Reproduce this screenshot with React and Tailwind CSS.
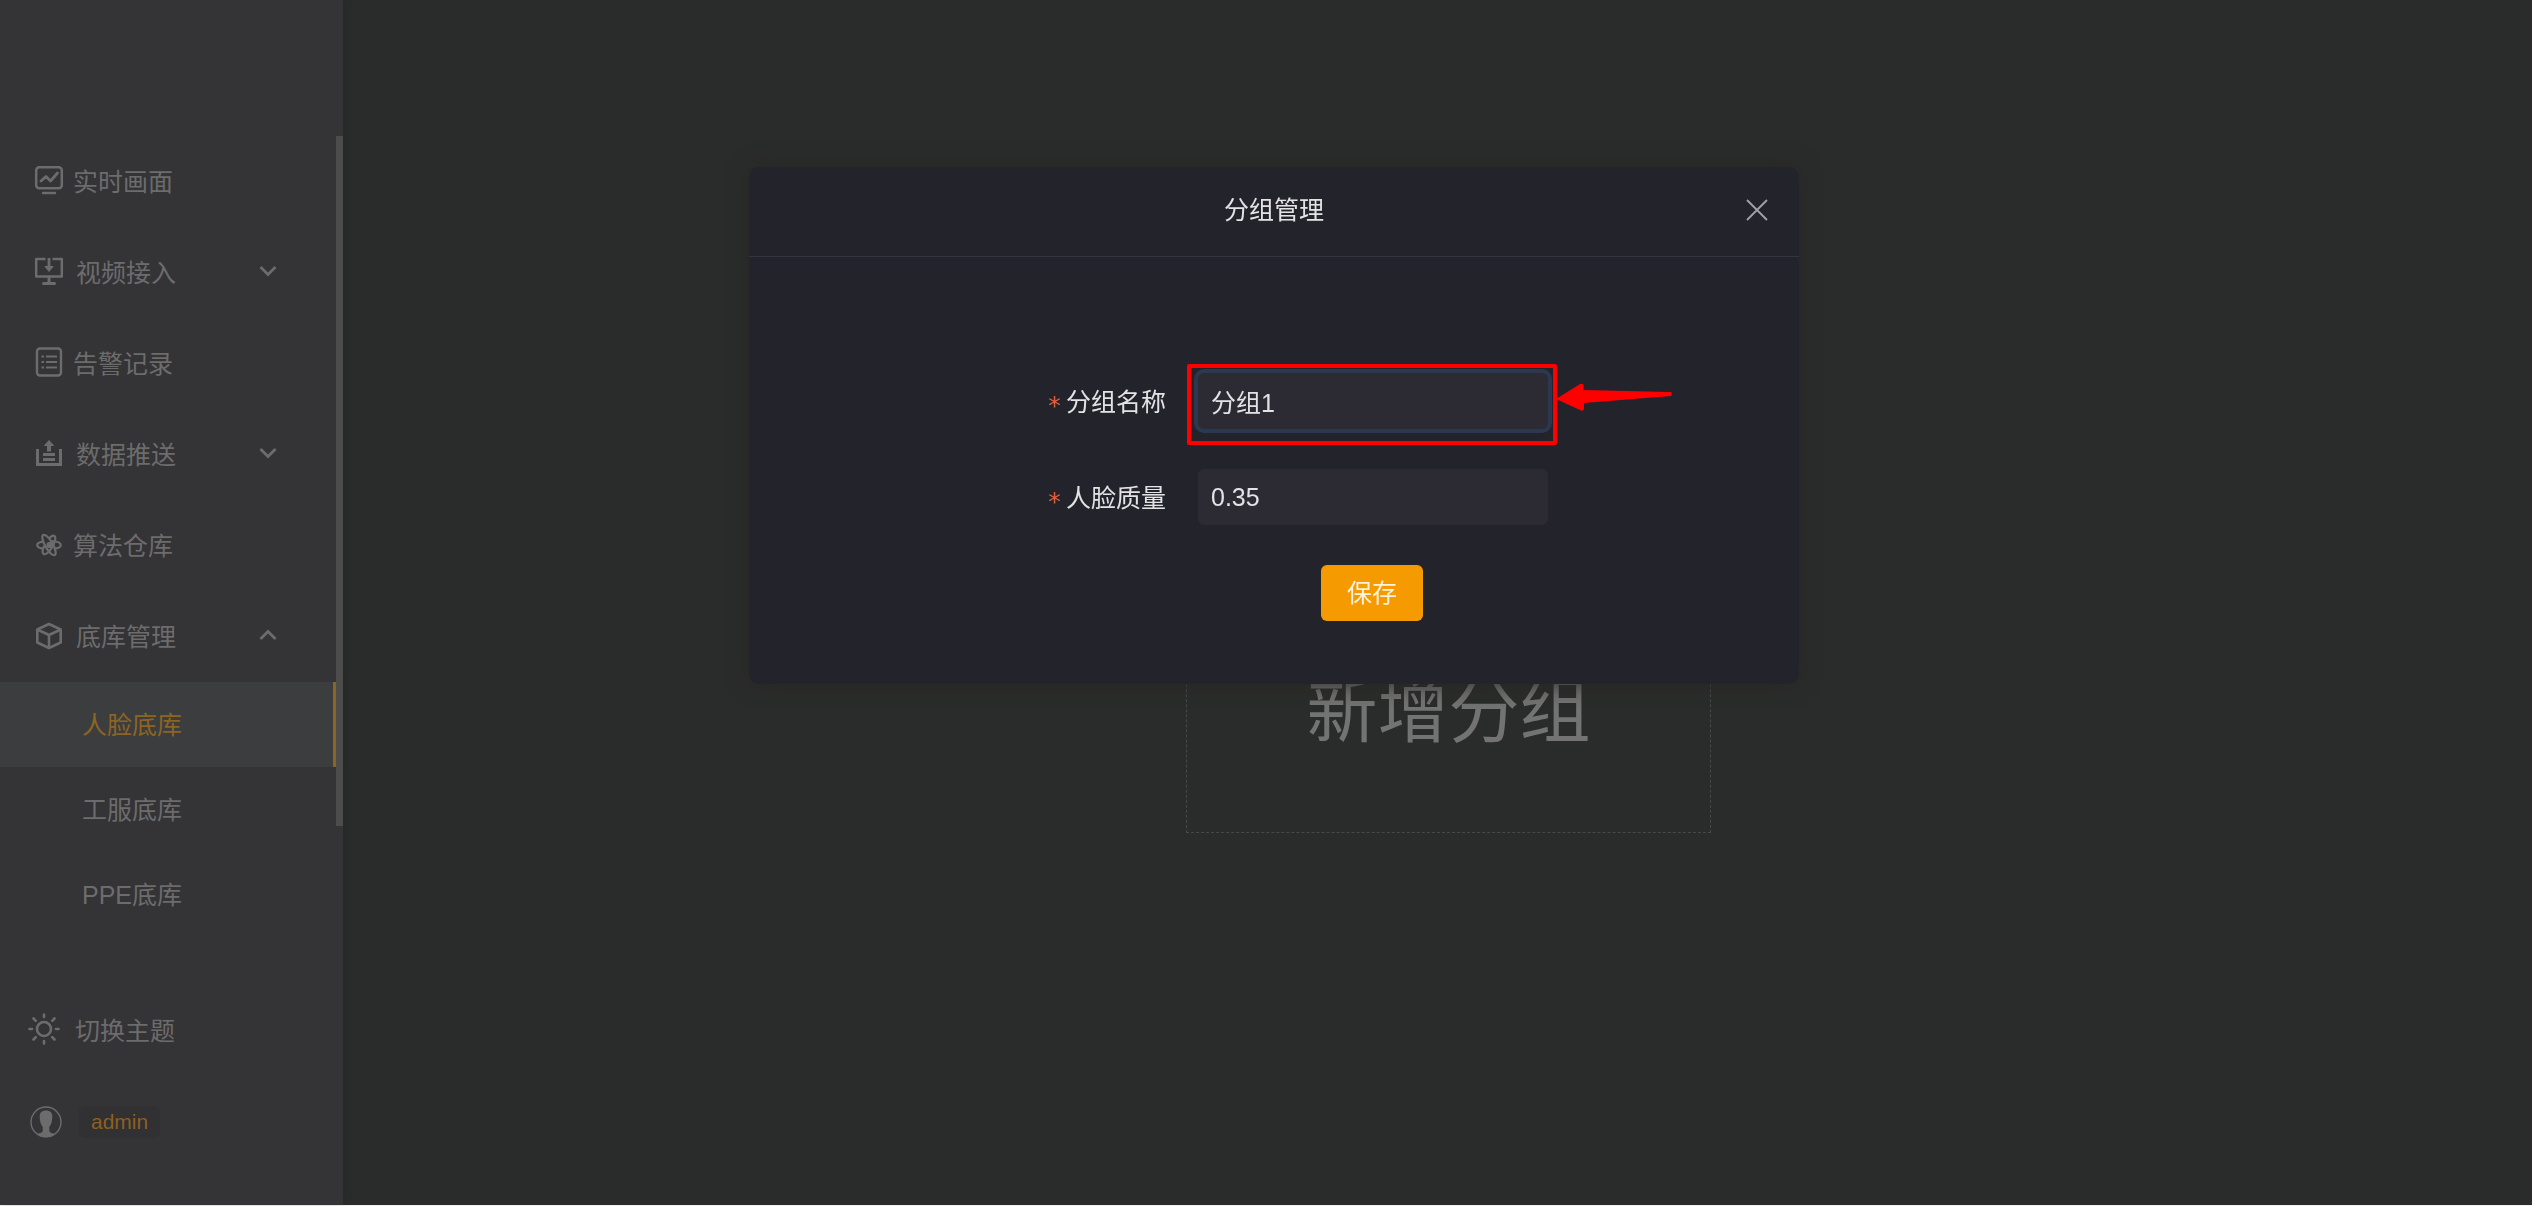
import { useState } from 'react';

const FONT = "font-['Liberation_Sans','Noto_Sans_CJK_SC',sans-serif]";

// --- ICONS ---
const LiveIcon = () => (
    <svg width="30" height="30" viewBox="0 0 30 30" fill="none" stroke="currentColor" strokeWidth="2.5" strokeLinecap="round" strokeLinejoin="round">
        <rect x="2.2" y="2.2" width="25.600" height="21" rx="3" />
        <path d="M7 16l5-4.500 4.500 4.500 7-8" strokeWidth="2.8" />
        <path d="M9 28h12" />
    </svg>
);

const VideoIcon = () => (
    <svg width="30" height="30" viewBox="0 0 30 30" fill="none" stroke="currentColor" strokeWidth="2.5" strokeLinejoin="round">
        <path d="M11.500 3H2.200v17.500h25.600V3H18.500" />
        <path d="M15 2v10" strokeWidth="2.800" />
        <path d="M11 10.500h8l-4 5z" fill="currentColor" strokeWidth="1" />
        <path d="M15 21v6M9.500 27.500h11" strokeWidth="3" strokeLinecap="round" />
    </svg>
);

const AlarmIcon = () => (
    <svg width="30" height="30" viewBox="0 0 30 30" fill="none" stroke="currentColor" strokeWidth="2.400">
        <rect x="3" y="1.500" width="24" height="27" rx="3" />
        <path d="M12 9.500h11M12 15h11M12 20.500h11M7.500 9.500h2.500M7.500 15h2.500M7.500 20.500h2.500" strokeWidth="2.200" />
    </svg>
);

const PushIcon = () => (
    <svg width="30" height="30" viewBox="0 0 30 30" fill="none" stroke="currentColor" strokeWidth="4">
        <path d="M3.500 11v15.500h23V11" strokeWidth="3" />
        <path d="M15 13.500V6" />
        <path d="M10.500 7.500L15 2.500l4.500 5z" fill="currentColor" strokeWidth="1" />
        <path d="M9 16.500h12M9 21.500h12" strokeWidth="3" />
    </svg>
);

const AtomIcon = () => (
    <svg width="30" height="30" viewBox="0 0 30 30" fill="none" stroke="currentColor" strokeWidth="2.200">
        <ellipse cx="15" cy="16" rx="11.600" ry="3.800" transform="rotate(60 15 16)" />
        <path d="M16.500 8.500c2-2.800 4.300-4 5.500-3.200 2 1.200.8 6.200-2 11-2.800 4.800-6.600 8.200-8.600 7-1.700-1-1.200-4.300.4-8" transform="translate(-1.700 1.700)" />
        <path d="M10 12.300C5.500 12.800 3.200 14.200 3.200 16s2.300 3.200 6.800 3.700M17 12c5.500.2 9.800 1.700 9.800 4s-3 3.300-7 3.700" />
        <circle cx="15.500" cy="16" r="2" fill="currentColor" />
    </svg>
);

const BoxIcon = () => (
    <svg width="30" height="30" viewBox="0 0 30 30" fill="none" stroke="currentColor" strokeWidth="2.600" strokeLinejoin="round">
        <path d="M15 4l11.700 5.500v13L15 28 3.300 22.500v-13z" />
        <path d="M3.300 9.500L15 15l11.700-5.500M15 15v13" />
    </svg>
);

const SunIcon = () => (
    <svg width="32" height="32" viewBox="0 0 32 32" fill="none" stroke="currentColor" strokeWidth="2.600" strokeLinecap="round">
        <circle cx="16" cy="16" r="7" />
        <path d="M16 1.500V4M16 28v2.500M1.500 16H4M28 16h2.500M5.500 5.500l2.300 2.300M24.200 24.200l2.300 2.300M5.500 26.500l2.300-2.300M24.200 7.800l2.300-2.300" />
    </svg>
);

const AvatarIcon = () => (
    <svg width="32" height="32" viewBox="0 0 32 32" fill="none">
        <circle cx="16" cy="16" r="15" stroke="currentColor" strokeWidth="1.400" />
        <path d="M16 4.500c4.500 0 6.300 2.200 6.300 6 0 3.500-.8 8-3 10.500v4c0 1.500 3.500 2.500 6 3C22.500 30.500 19.500 31 16 31s-6.500-.5-9.300-3c2.500-.5 6-1.500 6-3v-4c-2.200-2.500-3-7-3-10.500 0-3.800 1.800-6 6.300-6z" fill="currentColor" />
    </svg>
);

const Chevron = ({ open }) => (
    <svg width="18" height="12" viewBox="0 0 18 12" fill="none" stroke="currentColor" strokeWidth="2.800" className={open ? 'rotate-180' : ''}>
        <path d="M1.500 2l7.500 7.500L16.500 2" />
    </svg>
);

// --- MENÜ ---
const menu = [
    { key: 'live', name: '实时画面', Icon: LiveIcon },
    { key: 'video', name: '视频接入', Icon: VideoIcon, sub: true },
    { key: 'alarm', name: '告警记录', Icon: AlarmIcon },
    { key: 'push', name: '数据推送', Icon: PushIcon, sub: true },
    { key: 'algo', name: '算法仓库', Icon: AtomIcon },
    { key: 'base', name: '底库管理', Icon: BoxIcon, sub: true, open: true },
];

const subMenu = [
    { key: 'face', name: '人脸底库' },
    { key: 'cloth', name: '工服底库' },
    { key: 'ppe', name: 'PPE底库' },
];

function Sidebar() {
    const [active, setActive] = useState('face');

    return (
        <aside className="w-[343px] shrink-0 flex flex-col justify-between bg-[#343335] text-[#6c6c6d] pt-[136px] pb-[38px] shadow-[0_0_8px_rgba(0,0,0,0.15)]">
            <div className="flex">
                <nav className="flex-1">
                    {menu.map(({ key, name, Icon, sub, open }) => (
                        <button key={key} className={`w-full h-[91px] flex items-center pl-[34px] pr-[59px] ${sub ? 'gap-3' : 'gap-[9px]'}`}>
                            <span className="pb-1"><Icon /></span>
                            <span>{name}</span>
                            {sub && <span className="ml-auto pb-1"><Chevron open={open} /></span>}
                        </button>
                    ))}
                    {subMenu.map((s) => (
                        <button
                            key={s.key}
                            onClick={() => setActive(s.key)}
                            className={`w-full h-[85px] flex items-center pl-[82px] border-r-3 ${active === s.key ? 'bg-[#3c3d3f] text-[#8c6523] border-[#8c6523]' : 'border-transparent'}`}
                        >
                            {s.name}
                        </button>
                    ))}
                </nav>
                <div className="w-[7px] h-[690px] bg-[#4c4c4c]" />
            </div>

            <div>
                <button className="w-full h-[91px] flex items-center gap-[15px] pl-7">
                    <span className="pb-1"><SunIcon /></span>
                    <span>切换主题</span>
                </button>
                <div className="h-[91px] flex items-center gap-[17px] pl-[30px]">
                    <AvatarIcon />
                    <span className="h-8 px-3 flex items-center rounded-md bg-[#313032] text-[#8c6023] text-[21px]">admin</span>
                </div>
            </div>
        </aside>
    );
}

function Field({ id, label, value, onChange, focused }) {
    return (
        <div className="flex items-center">
            <label htmlFor={id} className="w-[417px] pr-8 pt-0.5 flex items-center justify-end gap-1">
                <span className="pt-2 text-[#e0603c] font-['DejaVu_Sans_Mono',monospace]">*</span>
                {label}
            </label>
            <div className="relative">
                <input
                    id={id}
                    value={value}
                    onChange={(e) => onChange(e.target.value)}
                    className={`w-[350px] h-14 px-[13px] rounded-md bg-[#2c2b33] outline-none ${focused ? 'ring-4 ring-[#2b3850]' : ''}`}
                />
                {focused && <Marker />}
            </div>
        </div>
    );
}

// Roter Rahmen mit Pfeil
const Marker = () => (
    <>
        <div className="absolute -top-[9px] -bottom-4 -left-[11px] -right-[9px] border-4 border-[#fe0000] rounded-xs pointer-events-none" />
        <svg className="absolute left-[358px] top-[10px] pointer-events-none" width="118" height="30" viewBox="0 0 118 30" fill="#fe0000">
            <path d="M0 16L24 1q3-1 3.500 1v5L115 9q1.500 2 0 4L28 20v6q-1 3-4 1z" />
        </svg>
    </>
);

function GroupDialog({ onClose }) {
    const [name, setName] = useState('分组1');
    const [quality, setQuality] = useState('0.35');

    return (
        <div role="dialog" aria-labelledby="dialog-title" className="w-[1050px] rounded-[10px] bg-[#23232c] text-[#e3e3e5] shadow-[0_0_21px_rgba(40,38,36,1)]">
            <header className="h-[90px] grid grid-cols-[1fr_auto_1fr] items-center px-[30px] pb-1 border-b border-[#36353f]">
                <h2 id="dialog-title" className="col-start-2">分组管理</h2>
                <button aria-label="关闭" onClick={onClose} className="justify-self-end text-[#a3a3a6]">
                    <svg width="24" height="24" viewBox="0 0 24 24" fill="none" stroke="currentColor" strokeWidth="1.800">
                        <path d="M2 2l20 20M22 2L2 22" />
                    </svg>
                </button>
            </header>
            <form className="flex flex-col gap-10 pt-[116px] pb-[63px] pl-8" onSubmit={(e) => e.preventDefault()}>
                <Field id="group-name" label="分组名称" value={name} onChange={setName} focused />
                <Field id="face-quality" label="人脸质量" value={quality} onChange={setQuality} />
                <div className="pl-[417px]">
                    <div className="w-[348px] flex justify-center">
                        <button type="submit" className="h-14 px-[26px] rounded-md bg-[#f59a00] text-[#fff3dc]">保存</button>
                    </div>
                </div>
            </form>
        </div>
    );
}

export default function App() {
    const [open, setOpen] = useState(true);

    return (
        <div className={`min-h-screen flex bg-[#2a2c2b] border-b border-[#f5f0f2] text-[25px] leading-9 ${FONT}`}>
            <Sidebar />
            <main className="flex-1 flex justify-center items-start pt-[483px] pl-[22px]">
                <button onClick={() => setOpen(true)} className="w-[525px] h-[350px] pt-[107px] flex items-center justify-center border border-dashed border-[#48484b] text-[71px] leading-none text-[#737373]">
                    新增分组
                </button>
            </main>

            {open && (
                <div className="fixed inset-0 flex justify-center items-start pt-[167px] pl-4">
                    <GroupDialog onClose={() => setOpen(false)} />
                </div>
            )}
        </div>
    );
}
